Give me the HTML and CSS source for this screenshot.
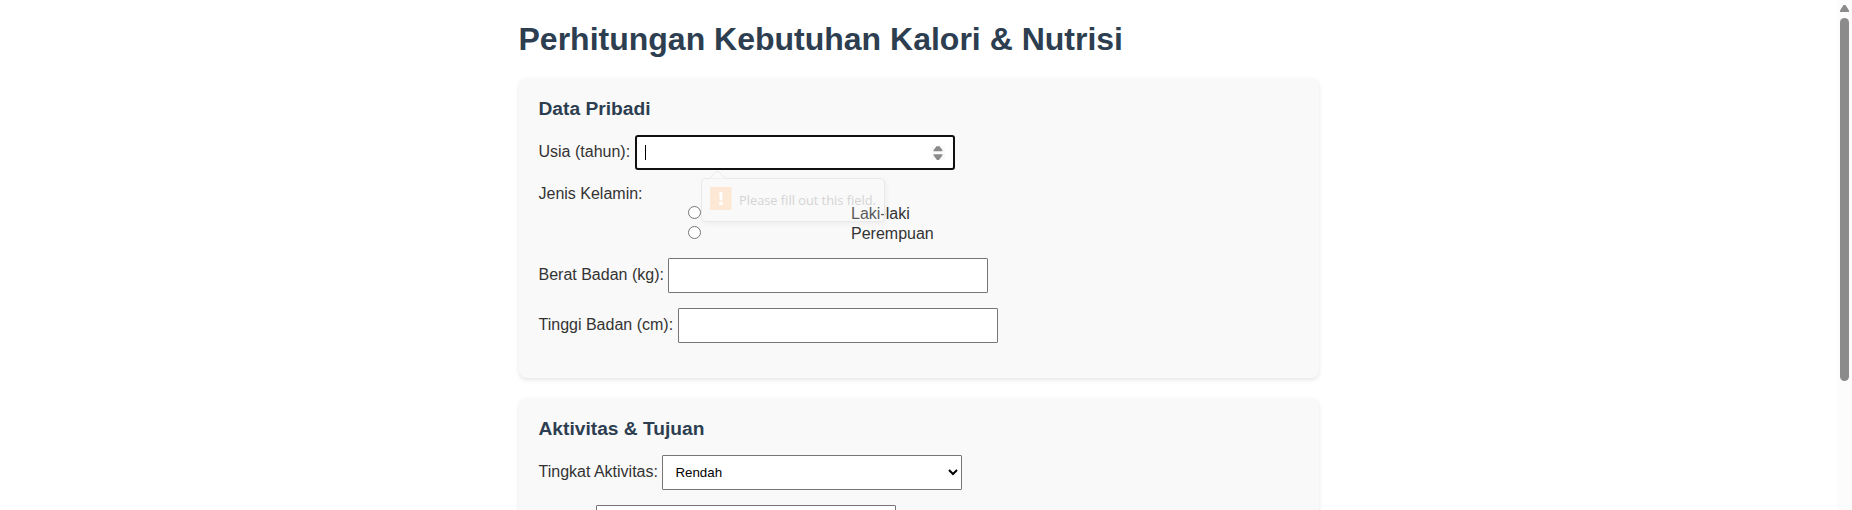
FILE: index.html
```html
<!DOCTYPE html>
<html lang="id">
<head>
<meta charset="utf-8">
<title>Perhitungan Kebutuhan Kalori &amp; Nutrisi</title>
<link rel="stylesheet" href="styles.css">
</head>
<body>
<div class="viewport">
  <main class="page">
    <h1 class="title">Perhitungan Kebutuhan Kalori &amp; Nutrisi</h1>
    <section class="card">
      <h2 class="card-title">Data Pribadi</h2>
      <div class="row">
        <label for="usia">Usia (tahun):</label>
        <div class="field focused">
          <div class="caret"></div>
          <input class="bare" id="usia" type="text">
          <svg class="spinner" width="14" height="14" viewBox="0 0 14 14"><path fill="#fafafa" d="M0 0h14v14H0z"/><path fill="#8b8b8b" d="M2.600 5.200V4L5.500.3h3L11.400 4v1.200zM2.600 8.200h8.800v1.200L8 14H6L2.600 9.400z"/></svg>
          <div class="tooltip">
            <svg class="tip-arrow" width="17" height="9" viewBox="0 0 17 9"><path d="M.5 8.500L8.500.7l8 7.800" fill="#fafafa" stroke="#e9e9e9"/></svg>
            <svg class="tip-icon" width="22" height="23" viewBox="0 0 22 23"><rect width="21.500" height="23" rx="1" fill="#fce8d4"/><path d="M9.300 5h3.400l-.4 8.500H9.700zM9.200 15h3.600v3H9.200z" fill="#fff"/></svg>
            <span class="tip-text">Please fill out this field.</span>
          </div>
        </div>
      </div>
      <div class="gender">
        <div class="gender-label">Jenis Kelamin:</div>
        <label class="option"><input type="radio" name="jk"><span>Laki-laki</span></label>
        <label class="option"><input type="radio" name="jk"><span>Perempuan</span></label>
      </div>
      <div class="row">
        <label for="berat">Berat Badan (kg):</label>
        <input class="field" id="berat" type="text">
      </div>
      <div class="row">
        <label for="tinggi">Tinggi Badan (cm):</label>
        <input class="field" id="tinggi" type="text">
      </div>
    </section>
    <section class="card">
      <h2 class="card-title">Aktivitas &amp; Tujuan</h2>
      <div class="row">
        <label for="aktivitas">Tingkat Aktivitas:</label>
        <select class="field select" id="aktivitas"><option>Rendah</option></select>
      </div>
      <div class="row row-indented">
        <select class="field select"><option></option></select>
      </div>
    </section>
  </main>
  <div class="scrollbar">
    <svg width="9" height="7" viewBox="0 0 9 7"><path fill="#8b8b8b" d="M3.500 0h2L9 5.500V7H0V5.500z"/></svg>
    <div class="track"><div class="thumb"></div></div>
    <svg width="9" height="7" viewBox="0 0 9 7"><path fill="#8b8b8b" d="M3.500 7h2L9 1.500V0H0v1.500z"/></svg>
  </div>
</div>
</body>
</html>
```
FILE: styles.css
```css
* { box-sizing: border-box; }
body {
  margin: 0;
  background: #fff;
  color: #333;
  font: 16px/18px "Liberation Sans", Arial, sans-serif;
}
.viewport {
  display: grid;
  grid-template-columns: 1fr 15px;
  height: 510px;
  overflow: hidden;
}
.page {
  width: 800px;
  margin: 0 auto;
  padding-top: 21px;
}
.title {
  margin: 0 0 21px;
  color: #2c3e50;
  font-size: 32px;
  line-height: 36px;
}
.card {
  height: 300px;
  margin-bottom: 20px;
  padding: 20px;
  border-radius: 8px;
  background: #f9f9f9;
  box-shadow: 0 2px 4px rgba(0, 0, 0, .1);
}
.card-title {
  margin: 0 0 15px;
  color: #2c3e50;
  font-size: 19.2px;
  line-height: 22px;
}
.row {
  display: flex;
  align-items: center;
  gap: 4.45px;
  height: 35px;
  margin-bottom: 15px;
}
.row-indented { padding-left: 57.5px; }
.row > label { margin-top: -2px; }
.field {
  width: 320px;
  height: 35px;
  margin: 0;
  padding: 8px;
  border: 1px solid #767676;
  border-radius: 1px;
  background: #fff;
}
.focused {
  display: flex;
  align-items: center;
  position: relative;
  border: 2px solid #101010;
  border-radius: 3px;
}
.bare {
  flex: 1;
  min-width: 0;
  border: 0;
  padding: 0;
  outline: 0;
  background: transparent;
}
.caret { width: 1px; height: 15px; background: #000; }
.tooltip {
  position: absolute;
  left: 64px;
  top: 41px;
  display: flex;
  align-items: center;
  gap: 7.5px;
  width: 184px;
  height: 44px;
  padding: 0 0 3px 8px;
  border: 1px solid #e9e9e9;
  border-radius: 4px;
  background: rgba(250, 250, 250, .2);
  box-shadow: 2px 3px 5px rgba(0, 0, 0, .04);
  color: #d4d4d4;
  font: 12.8px/18px "Open Sans", "Noto Sans", sans-serif;
  white-space: nowrap;
}
.tip-arrow { position: absolute; left: 7px; top: -9px; }
.tip-icon { flex: none; }
.tip-text { padding-top: 3px; }
.gender { height: 58px; margin-bottom: 15px; }
.option {
  display: flex;
  align-items: center;
  height: 20px;
}
.option input { width: 13px; height: 13px; margin: 0 150.5px 1px 149px; }
.option span { padding-top: 1px; }
.select {
  width: 300px;
  color: #000;
  font: 13.333px "Liberation Sans", Arial, sans-serif;
}
.scrollbar {
  display: flex;
  flex-direction: column;
  align-items: center;
  padding: 5px 0 4px;
  background: #fcfcfc;
}
.scrollbar svg { display: block; }
.track { flex: 1; padding-top: 6px; }
.thumb { width: 9px; height: 363px; border-radius: 5px; background: #8b8b8b; }
```
